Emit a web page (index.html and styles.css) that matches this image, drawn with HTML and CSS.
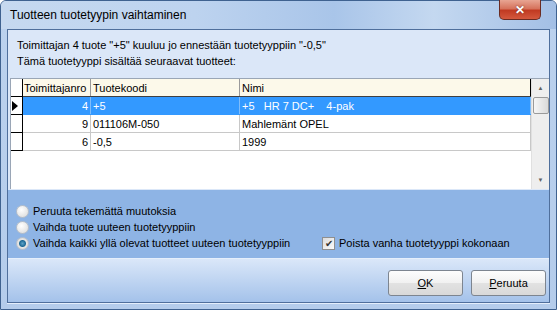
FILE: index.html
```html
<!DOCTYPE html>
<html lang="fi">
<head>
    <meta charset="UTF-8">
    <title>Tuotteen tuotetyypin vaihtaminen</title>
    <link rel="stylesheet" href="styles.css">
</head>
<body>
    <div class="window">
        <div class="titlebar">
            <span class="title">Tuotteen tuotetyypin vaihtaminen</span>
            <button class="close">&#x2715;</button>
        </div>
        <div class="client">
            <div class="top-panel">
                <p class="message">Toimittajan 4 tuote "+5" kuuluu jo ennestään tuotetyyppiin "-0,5"<br>Tämä tuotetyyppi sisältää seuraavat tuotteet:</p>
                <div class="grid">
                    <table class="rows">
                        <tr class="head">
                            <td class="ind"></td>
                            <td class="c1">Toimittajanro</td>
                            <td class="c2">Tuotekoodi</td>
                            <td class="c3">Nimi</td>
                        </tr>
                        <tr class="selected">
                            <td class="ind"><span class="arrow"></span></td>
                            <td class="num">4</td>
                            <td>+5</td>
                            <td>+5&nbsp;&nbsp;&nbsp;HR 7 DC+&nbsp;&nbsp;&nbsp;&nbsp;4-pak</td>
                        </tr>
                        <tr>
                            <td class="ind"></td>
                            <td class="num">9</td>
                            <td>011106M-050</td>
                            <td>Mahlemänt OPEL</td>
                        </tr>
                        <tr>
                            <td class="ind"></td>
                            <td class="num">6</td>
                            <td>-0,5</td>
                            <td>1999</td>
                        </tr>
                    </table>
                    <div class="scrollbar">
                        <span class="sb-arrow">&#x25B2;</span>
                        <span class="thumb"></span>
                        <span class="sb-arrow down">&#x25BC;</span>
                    </div>
                </div>
            </div>
            <div class="options">
                <label class="option"><span class="radio"></span>Peruuta tekemättä muutoksia</label>
                <label class="option"><span class="radio"></span>Vaihda tuote uuteen tuotetyyppiin</label>
                <div class="option-row">
                    <label class="option wide"><span class="radio checked"></span>Vaihda kaikki yllä olevat tuotteet uuteen tuotetyyppiin</label>
                    <label class="option"><span class="check">&#x2714;</span>Poista vanha tuotetyyppi kokonaan</label>
                </div>
            </div>
            <div class="buttons">
                <button class="btn"><u>O</u>K</button>
                <button class="btn"><u>P</u>eruuta</button>
            </div>
        </div>
    </div>
</body>
</html>
```

FILE: styles.css
```css
body {
    margin: 0;
    width: 557px;
    height: 310px;
    overflow: hidden;
    background: #ffffff;
    font-family: "Liberation Sans", Arial, sans-serif;
    font-size: 11px;
    color: #000;
}

.window {
    box-sizing: border-box;
    width: 557px;
    height: 310px;
    border: 1px solid #3f6290;
    border-radius: 6px 6px 0 0;
    background: linear-gradient(to bottom, #bcd2ee, #b4cceb);
    display: flex;
    flex-direction: column;
    padding: 0 6px 6px;
}

.titlebar {
    height: 28px;
    display: flex;
    justify-content: space-between;
    align-items: flex-start;
    margin: 0 -6px;
    padding: 0 9px;
    border-radius: 5px 5px 0 0;
    background: linear-gradient(to right, #c6d9f0 0%, #bdd3ef 35%, #a9c5e9 60%, #c4d8f0 78%, #a3bfe5 100%);
}

.title {
    font-size: 12px;
    line-height: 28px;
    color: #000;
}

.close {
    width: 42px;
    height: 20px;
    margin: -1px 6px 0 0;
    border: 1px solid #6a2b22;
    border-top: none;
    border-radius: 0 0 5px 5px;
    background: linear-gradient(to bottom, #e8a593 0%, #d6735c 45%, #c13a22 55%, #d4583d 100%);
    color: #fff;
    font-size: 12px;
    font-weight: bold;
    line-height: 18px;
    padding: 0;
    text-shadow: 0 0 2px #6a2b22;
}

.client {
    flex: 1;
    border: 1px solid #4f6f9c;
    display: flex;
    flex-direction: column;
    box-shadow: 0 1px 0 #e4eefb;
}

.top-panel {
    height: 160px;
    background: #dbe7f8;
    padding: 0 0 0 2px;
}

.message {
    margin: 7px 0 9px 7px;
    line-height: 16px;
}

.grid {
    display: flex;
    height: 110px;
    border-top: 1px solid #9aa6b6;
    border-left: 1px solid #9aa6b6;
    background: #fff;
}

.rows {
    flex: 1;
    align-self: flex-start;
    border-collapse: collapse;
    table-layout: fixed;
}

.rows td {
    height: 17px;
    padding: 0 2px;
    border-right: 1px solid #c8c8c8;
    border-bottom: 1px solid #c8c8c8;
    white-space: nowrap;
    overflow: hidden;
}

.rows .ind {
    width: 7px;
    background: #fff;
    border-right: 1px solid #000;
    border-bottom: 1px solid #000;
}

.rows .c1 {
    width: 64px;
    padding-left: 1px;
}

.rows .c2 {
    width: 144px;
}

.head td {
    background: #fcf9ea;
    border-bottom: 1px solid #404040;
    border-right: 1px solid #9a9a9a;
}

.head .c3 {
    border-right: 1px solid #000;
}

.num {
    text-align: right;
}

.selected td {
    background: #3399ff;
    color: #fff;
    border-right-color: #7fbdfb;
    border-bottom-color: #3399ff;
}

.selected .ind {
    background: #fff;
    border-bottom-color: #000;
    border-right-color: #000;
}

.arrow {
    display: block;
    width: 0;
    height: 0;
    margin-left: -1px;
    border-top: 5px solid transparent;
    border-bottom: 5px solid transparent;
    border-left: 6px solid #000;
}

.scrollbar {
    width: 17px;
    display: flex;
    flex-direction: column;
    align-items: center;
    background: #eeeeee;
    border-left: 1px solid #e0e0e0;
}

.sb-arrow {
    height: 18px;
    font-size: 6px;
    line-height: 18px;
    color: #606060;
}

.sb-arrow.down {
    margin-top: auto;
}

.thumb {
    width: 14px;
    height: 15px;
    border: 1px solid #9a9a9a;
    border-radius: 2px;
    background: linear-gradient(to right, #f6f6f6, #dadada);
}

.options {
    height: 68px;
    background: #8eb4e5;
    padding: 13px 0 0 8px;
    box-sizing: border-box;
    display: flex;
    flex-direction: column;
}

.option {
    display: flex;
    align-items: center;
    height: 16px;
    color: #000;
}

.option-row {
    display: flex;
}

.option.wide {
    width: 306px;
}

.radio {
    box-sizing: border-box;
    width: 13px;
    height: 13px;
    margin-right: 4px;
    border: 1px solid #b8c0ca;
    border-radius: 50%;
    background: radial-gradient(circle at 40% 35%, #ffffff, #d8d8d8);
}

.radio.checked {
    background: radial-gradient(circle at 50% 50%, #5ea3c8 0, #1e6a96 3px, #e6e6e6 4px, #d0d0d0 100%);
}

.check {
    box-sizing: border-box;
    width: 13px;
    height: 13px;
    margin-right: 4px;
    border: 1px solid #8f8f8f;
    background: linear-gradient(to bottom right, #dcdcdc, #fbfbfb);
    color: #333;
    font-size: 10px;
    line-height: 11px;
    text-align: center;
}

.buttons {
    flex: 1;
    display: flex;
    justify-content: flex-end;
    align-items: flex-start;
    gap: 8px;
    padding: 11px 3px 0 0;
    border-top: 1px solid #e6effb;
    background: linear-gradient(to bottom, #dae7f9, #a4c2ea);
}

.btn {
    width: 75px;
    height: 26px;
    border: 1px solid #7d8590;
    border-radius: 3px;
    background: linear-gradient(to bottom, #fdfdfd 0%, #f1f1f1 50%, #e2e2e2 51%, #d9d9d9 100%);
    font-family: "Liberation Sans", Arial, sans-serif;
    font-size: 11px;
    color: #000;
    padding: 0;
}
```
